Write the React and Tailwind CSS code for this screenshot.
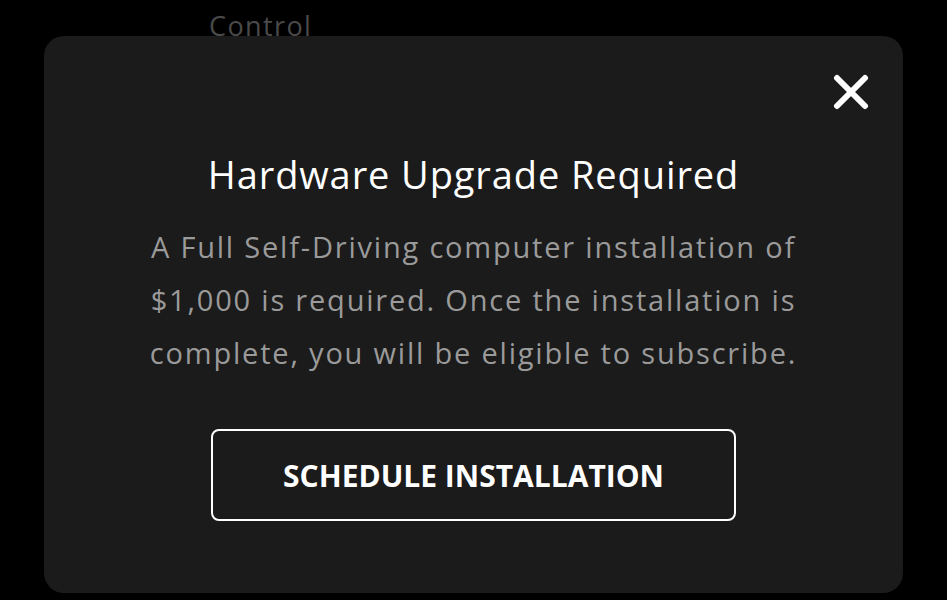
export default function App() {
  return (
    <div className="relative h-[600px] w-[947px] overflow-hidden bg-black font-['Open_Sans',sans-serif]">
      <div className="absolute left-[209px] top-[6px] text-[27px] tracking-[1.4px] text-[#4a4a4a]">Control</div>
      <div className="relative top-[36px] mx-auto flex h-[557px] w-[859px] flex-col items-center rounded-[20px] bg-[#1b1b1b] pt-[114px]">
        <button className="absolute right-[34px] top-[38px] text-white">
          <svg width="36" height="36" viewBox="0 0 36 36" fill="none" stroke="currentColor" strokeWidth="6" strokeLinecap="round">
            <path d="M4 4 L32 32 M32 4 L4 32" />
          </svg>
        </button>
        <h1 className="whitespace-nowrap text-[38px] leading-[48px] tracking-[0.9px] text-white">Hardware Upgrade Required</h1>
        <p className="mt-[22px] whitespace-nowrap text-center text-[29px] leading-[53px] tracking-[1.8px] text-[#9a9a9a]">
          A Full Self-Driving computer installation of
          <br />
          $1,000 is required. Once the installation is
          <br />
          complete, you will be eligible to subscribe.
        </p>
        <button className="mt-[50px] flex h-[92px] w-[525px] items-center justify-center rounded-[8px] border-2 border-white text-[30px] font-bold text-white">
          SCHEDULE INSTALLATION
        </button>
      </div>
    </div>
  );
}
